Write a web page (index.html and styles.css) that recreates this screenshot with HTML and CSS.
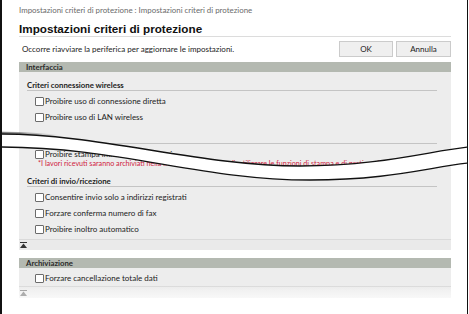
FILE: index.html
```html
<!DOCTYPE html>
<html lang="it">
<head>
    <meta charset="UTF-8">
    <meta name="viewport" content="width=device-width, initial-scale=1.0">
    <title>Impostazioni criteri di protezione</title>
    <link rel="stylesheet" href="styles.css">
</head>
<body>
    <div class="frame">
        <div class="crumb">Impostazioni criteri di protezione : Impostazioni criteri di protezione</div>
        <h1 class="title">Impostazioni criteri di protezione</h1>

        <div class="notice-row">
            <span class="notice">Occorre riavviare la periferica per aggiornare le impostazioni.</span>
            <div class="buttons">
                <button class="btn">OK</button>
                <button class="btn btn-wide">Annulla</button>
            </div>
        </div>

        <!-- Interfaccia -->
        <section class="group">
            <div class="group-head">Interfaccia</div>
            <div class="group-body">
                <div class="sub">
                    <div class="sub-title">Criteri connessione wireless</div>
                    <label class="check"><span class="box"></span>Proibire uso di connessione diretta</label>
                    <label class="check"><span class="box"></span>Proibire uso di LAN wireless</label>
                </div>
                <div class="sub">
                    <div class="sub-title"></div>
                    <label class="check"><span class="box"></span>Proibire stampa immediata dei lavori</label>
                    <div class="note">*I lavori ricevuti saranno archiviati nella memoria. Per stamparli, utilizzare le funzioni di stampa e di gestione lavori.</div>
                </div>
                <div class="sub">
                    <div class="sub-title">Criteri di invio/ricezione</div>
                    <label class="check"><span class="box"></span>Consentire invio solo a indirizzi registrati</label>
                    <label class="check"><span class="box"></span>Forzare conferma numero di fax</label>
                    <label class="check"><span class="box"></span>Proibire inoltro automatico</label>
                </div>
            </div>
            <div class="group-foot">
                <svg class="top-icon" width="7" height="6" viewBox="0 0 7 6"><rect x="0" y="0" width="7" height="1"/><path d="M3.5 1.5 L7 6 L0 6 Z"/></svg>
            </div>
        </section>

        <!-- Archiviazione -->
        <section class="group">
            <div class="group-head">Archiviazione</div>
            <div class="group-body group-body-short">
                <label class="check"><span class="box"></span>Forzare cancellazione totale dati</label>
            </div>
            <div class="group-foot group-foot-last">
                <svg class="top-icon" width="7" height="6" viewBox="0 0 7 6"><rect x="0" y="0" width="7" height="1"/><path d="M3.5 1.5 L7 6 L0 6 Z"/></svg>
            </div>
        </section>

        <!-- strappo della pagina -->
        <svg class="tear" width="469" height="314" viewBox="0 0 469 314">
            <defs>
                <linearGradient id="shade" x1="0" y1="0" x2="60" y2="0" gradientUnits="userSpaceOnUse">
                    <stop offset="0" stop-color="#000" stop-opacity="0.55"/>
                    <stop offset="1" stop-color="#000" stop-opacity="0"/>
                </linearGradient>
            </defs>
            <path d="M0,134 C100,134 200,166 300,166 C380,166 430,151 469,147 L469,163 C430,167 390,180 310,180 C200,180 120,147 0,147 Z" fill="#fff"/>
            <path d="M0,132.8 C100,132.8 200,164.8 300,164.8" fill="none" stroke="url(#shade)" stroke-width="2"/>
            <path d="M0,134 C100,134 200,166 300,166 C380,166 430,151 469,147" fill="none" stroke="#111" stroke-width="1.3"/>
            <path d="M0,147 C120,147 200,180 310,180 C390,180 430,167 469,163" fill="none" stroke="#111" stroke-width="1.3"/>
        </svg>
    </div>
</body>
</html>
```

FILE: styles.css
```css
/* base */
body {
    margin: 0;
    background-color: #ffffff;
    font-family: 'Lato', 'Liberation Sans', sans-serif;
    font-size: 8px;
    color: #222;
}

.frame {
    position: relative;
    width: 432px;
    height: 314px;
    padding: 0 16px 0 17px;
    border-left: 2px solid #111;
    border-right: 1px solid #111;
    overflow: hidden;
}

/* dissolvenza in basso */
.frame::after {
    content: "";
    position: absolute;
    left: -2px;
    right: -1px;
    bottom: 0;
    height: 30px;
    background: linear-gradient(to bottom, rgba(255, 255, 255, 0), rgba(255, 255, 255, 0.55));
}

.crumb {
    padding-top: 4px;
    line-height: 12px;
    font-size: 7.9px;
    color: #6a6a6a;
    white-space: nowrap;
}

.title {
    margin: 6px 0 0;
    font-family: 'Liberation Sans', sans-serif;
    font-size: 11.7px;
    line-height: 14px;
    font-weight: bold;
    color: #111;
    border-bottom: 1px solid #dcdcdc;
}

.notice-row {
    display: flex;
    align-items: center;
    justify-content: space-between;
    margin-top: 4px;
}

.notice {
    padding-left: 3px;
}

.buttons {
    display: flex;
    gap: 3px;
}

.btn {
    width: 54px;
    height: 16px;
    padding: 0;
    font-family: inherit;
    font-size: 8px;
    color: #222;
    background-color: #efefef;
    border: 1px solid #cbcbcb;
    border-radius: 0;
}

.btn-wide {
    width: 55px;
}

.group {
    margin-top: 5px;
}

.group + .group {
    margin-top: 8px;
}

.group-head {
    height: 10px;
    line-height: 10px;
    padding-left: 7px;
    background-color: #b4b9b1;
    font-weight: bold;
    font-size: 7.8px;
    color: #2a2a2a;
}

.group-body {
    background-color: #ededed;
    padding: 8px 14px 2px 8px;
}

.group-body-short {
    padding: 2px 14px 0 8px;
}

.sub + .sub {
    margin-top: 8px;
}

.sub-title {
    height: 10px;
    line-height: 10px;
    font-weight: bold;
    font-size: 7.8px;
    color: #222;
    border-bottom: 1px solid #c4c4c4;
    margin-bottom: 2px;
}

.check {
    display: flex;
    align-items: center;
    height: 16px;
    padding-left: 8px;
    white-space: nowrap;
}

.box {
    width: 7px;
    height: 7px;
    margin-right: 1px;
    border: 1px solid #6b6b6b;
    border-radius: 1px;
    background-color: #fff;
    flex-shrink: 0;
}

.note {
    margin-top: -3px;
    margin-bottom: 3px;
    padding-left: 11px;
    line-height: 9px;
    font-size: 7.2px;
    color: #d0233f;
    white-space: nowrap;
}

.group-foot {
    height: 10px;
    padding-left: 1px;
    display: flex;
    align-items: center;
    background-color: #eaeaea;
    border-top: 1px solid #dadada;
}

.group-foot-last {
    height: 11px;
    background: linear-gradient(to bottom, #ececec, #f6f6f6);
}

.top-icon {
    fill: #333;
}

.group-foot-last .top-icon {
    fill: #999;
}

/* overlay dello strappo */
.tear {
    position: absolute;
    top: 0;
    left: -2px;
    pointer-events: none;
    z-index: 2;
}
```
